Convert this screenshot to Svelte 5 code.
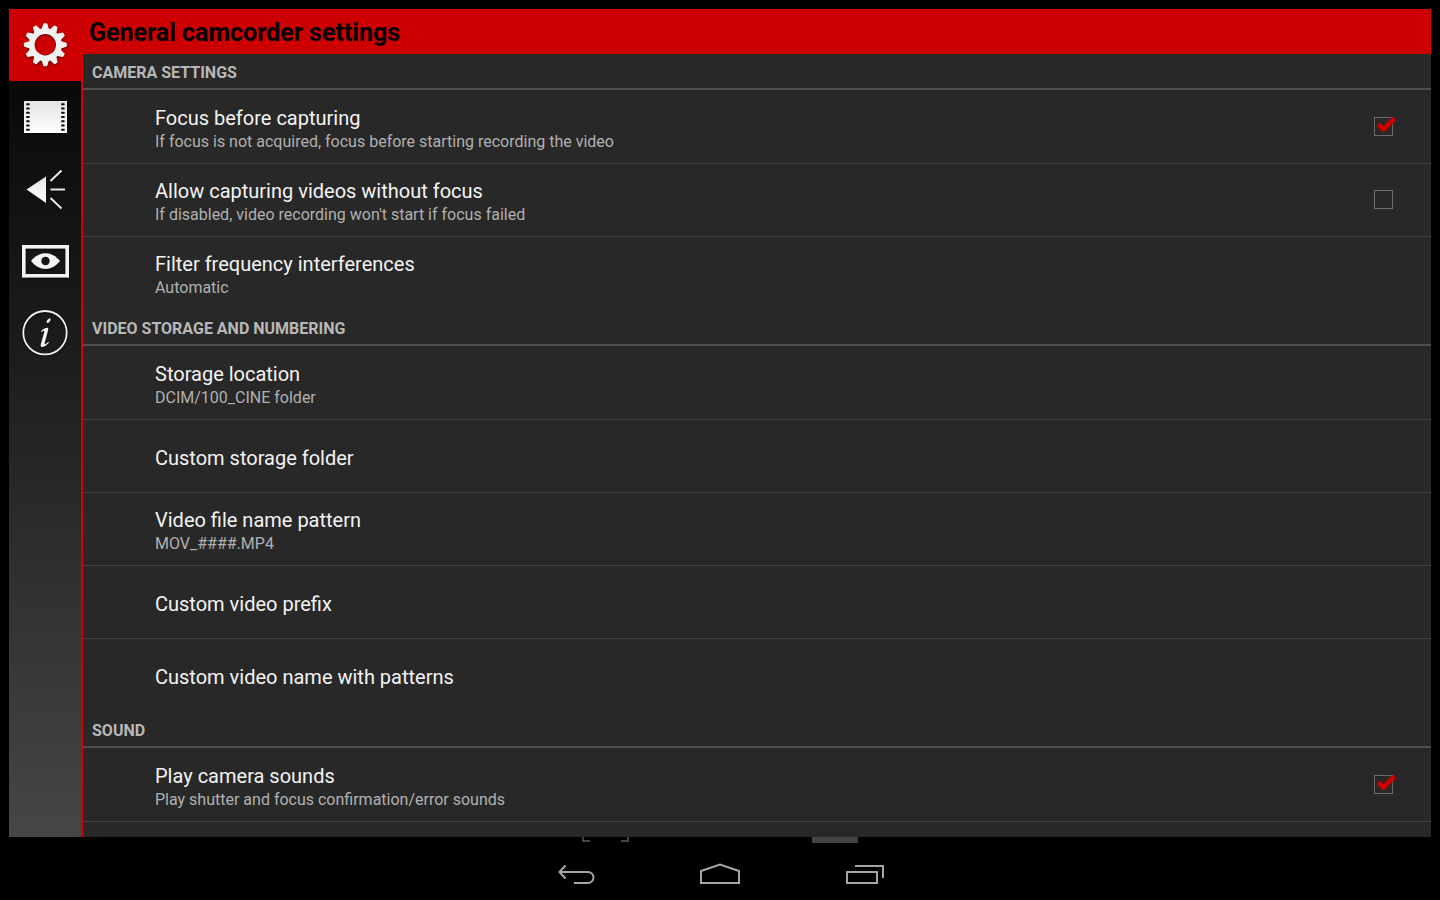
<script>
  const tabs = [
    { id: 'general', label: 'General camcorder settings' },
    { id: 'video', label: 'Video' },
    { id: 'audio', label: 'Audio' },
    { id: 'display', label: 'Display' },
    { id: 'about', label: 'About' }
  ];
  let active = $state('general');

  let sections = $state([
    {
      title: 'CAMERA SETTINGS',
      rows: [
        { id: 'focus', title: 'Focus before capturing', note: 'If focus is not acquired, focus before starting recording the video', checked: true },
        { id: 'nofocus', title: 'Allow capturing videos without focus', note: "If disabled, video recording won't start if focus failed", checked: false },
        { id: 'filter', title: 'Filter frequency interferences', note: 'Automatic' }
      ]
    },
    {
      title: 'VIDEO STORAGE AND NUMBERING',
      rows: [
        { id: 'location', title: 'Storage location', note: 'DCIM/100_CINE folder' },
        { id: 'folder', title: 'Custom storage folder' },
        { id: 'pattern', title: 'Video file name pattern', note: 'MOV_####.MP4' },
        { id: 'prefix', title: 'Custom video prefix' },
        { id: 'name', title: 'Custom video name with patterns' }
      ]
    },
    {
      title: 'SOUND',
      open: true,
      rows: [
        { id: 'sounds', title: 'Play camera sounds', note: 'Play shutter and focus confirmation/error sounds', checked: true }
      ]
    }
  ]);

  const teeth = Array.from({ length: 12 }, (_, i) => i * 30);
  const holes = [0, 1, 2, 3, 4, 5, 6];
</script>

{#snippet words(row)}
  <span class="words">
    <span class="name">{row.title}</span>
    {#if row.note}<span class="note">{row.note}</span>{/if}
  </span>
{/snippet}

<div class="screen">
  <div class="window">
    <nav class="tabs" aria-label="Categories">
      {#each tabs as tab}
        <button class="tab" class:active={active === tab.id} aria-label={tab.label} onclick={() => (active = tab.id)}>
          <svg viewBox="0 0 72 72" width="72" height="72" aria-hidden="true">
            <defs>
              <linearGradient id="shade-{tab.id}" x1="0" y1="0" x2="0" y2="1">
                <stop offset="0" stop-color="#e4e4e4" />
                <stop offset="1" stop-color="#ffffff" />
              </linearGradient>
            </defs>
            {#if tab.id === 'general'}
              <g fill="#f1f1f1">
                {#each teeth as angle}
                  <path d="M32.9 21 L34.8 14.8 H37.8 L39.7 21 Z" stroke="#f1f1f1" stroke-linejoin="round" transform="rotate({angle} 36.3 35.8)" />
                {/each}
                <circle cx="36.3" cy="35.8" r="13.6" fill="none" stroke="#f1f1f1" stroke-width="5.8" />
              </g>
            {:else if tab.id === 'video'}
              <rect x="15" y="20" width="43" height="32" fill="url(#shade-video)" />
              {#each holes as n}
                <rect x="17.2" y={22.3 + n * 4.25} width="3.4" height="2" rx="0.5" fill="#0c0c0c" />
                <rect x="52.2" y={22.3 + n * 4.25} width="3.4" height="2" rx="0.5" fill="#0c0c0c" />
              {/each}
            {:else if tab.id === 'audio'}
              <path d="M17.5 36.5 L37 23.5 V50 Z" fill="url(#shade-audio)" />
              <path d="M41.5 28 L52.5 17.5 M41.5 36.5 H56 M41.5 45 L52.5 55.5" fill="none" stroke="#e8e8e8" stroke-width="2" />
            {:else if tab.id === 'display'}
              <rect x="14.8" y="21.8" width="43.4" height="29" fill="none" stroke="#f3f3f3" stroke-width="3.6" />
              <path d="M22 36 C30 25.5 43 25.5 51 36 C43 46.5 30 46.5 22 36 Z" fill="#f3f3f3" />
              <circle cx="36.5" cy="36" r="4.2" fill="#151515" />
            {:else}
              <circle cx="36" cy="35.7" r="21.7" fill="none" stroke="#f1f1f1" stroke-width="1.8" />
              <path d="M37.6 24.8 C37.8 23 39 21.8 40.4 21.4 C41.4 21.2 41.8 22 41.4 23.2 C41 24.8 39.6 26 38.4 26 C37.8 26 37.5 25.5 37.6 24.8 Z" fill="#f4f4f4" />
              <path d="M32 34.2 C34 32.2 36.5 30.7 38.2 30.8 C39.4 31 39.5 32 39 33.8 L35.6 46.2 C35.4 47.2 35.8 47.5 36.5 47.1 L39.6 44.8 L40 45.4 C37.5 48.3 35 50 33 50 C31.6 50 31.4 48.8 31.8 47.2 L35.2 35.2 C35.5 33.9 35 33.6 34.2 34 L32.3 34.9 Z" fill="#f4f4f4" />
            {/if}
          </svg>
        </button>
      {/each}
    </nav>

    <main class="content">
      <h1>General camcorder settings</h1>
      <div class="list">
        {#each sections as section}
          <section>
            <h2>{section.title}</h2>
            <ul class:open={section.open}>
              {#each section.rows as row}
                <li>
                  {#if row.checked !== undefined}
                    <label class="row" for={row.id}>
                      {@render words(row)}
                      <span class="box">
                        <input id={row.id} type="checkbox" bind:checked={row.checked} />
                        <svg class="tick" viewBox="0 0 24 24" width="24" height="24" aria-hidden="true">
                          <path d="M4.5 10.5 L9.5 15.5 L20.5 4.5" fill="none" stroke="#d40000" stroke-width="4" />
                        </svg>
                      </span>
                    </label>
                  {:else}
                    <button class="row">{@render words(row)}</button>
                  {/if}
                </li>
              {/each}
            </ul>
          </section>
        {/each}
      </div>
    </main>
  </div>

  <footer class="system">
    <div class="keys">
      <div class="key">
        <svg class="peek" viewBox="0 0 48 6" width="48" height="6" aria-hidden="true">
          <path d="M1 0 V4 H8 M39 4 H46 V0" fill="none" stroke="#444" stroke-width="2" />
        </svg>
        <button aria-label="Back">
          <svg viewBox="0 0 48 28" width="48" height="28" aria-hidden="true">
            <path d="M13.5 5.5 L7.5 12 L13.5 18.5 M7.5 12 H36 A5.5 5.5 0 0 1 36 23 H22" fill="none" stroke="#a6a6a6" stroke-width="2" />
          </svg>
        </button>
      </div>
      <div class="key">
        <button aria-label="Home">
          <svg viewBox="0 0 48 28" width="48" height="28" aria-hidden="true">
            <path d="M5 23 V11 L24 4.5 L43 11 V23 Z" fill="none" stroke="#a6a6a6" stroke-width="2" />
          </svg>
        </button>
      </div>
      <div class="key">
        <svg class="peek right" viewBox="0 0 48 6" width="48" height="6" aria-hidden="true">
          <path d="M1 0 H47 V6 H1 Z" fill="#444" />
        </svg>
        <button aria-label="Recent apps">
          <svg viewBox="0 0 48 28" width="48" height="28" aria-hidden="true">
            <path d="M7 12 H37 V23 H7 Z M15 6 H43 V18" fill="none" stroke="#a6a6a6" stroke-width="2" />
          </svg>
        </button>
      </div>
    </div>
  </footer>
</div>

<style>
  :global(body) {
    margin: 0;
    background: #000;
  }
  .screen {
    box-sizing: border-box;
    height: 100vh;
    padding: 9px 9px 0;
    display: flex;
    flex-direction: column;
    background: #000;
    font-family: Roboto, "Noto Sans", sans-serif;
    color: #f3f3f3;
  }
  button {
    margin: 0;
    padding: 0;
    border: 0;
    background: none;
    color: inherit;
    font: inherit;
    text-align: left;
    cursor: pointer;
  }
  svg {
    display: block;
  }
  .window {
    flex: 1;
    min-height: 0;
    display: flex;
    overflow: hidden;
    background: #282828;
  }
  .tabs {
    flex: none;
    display: flex;
    flex-direction: column;
    background: linear-gradient(#000 0%, #0d0d0d 14%, #1a1a1a 38%, #464646 100%);
    border-right: 2px solid #d40000;
  }
  .tab {
    height: 72px;
  }
  .tab svg {
    filter: drop-shadow(0 1px 1px rgba(0, 0, 0, 0.6));
  }
  .tab.active {
    background: #cc0000;
  }
  .content {
    flex: 1;
    min-width: 0;
    display: flex;
    flex-direction: column;
  }
  h1 {
    flex: none;
    margin: 0 0 0 -2px;
    padding: 2px 8px 0;
    background: #cc0000;
    color: #000;
    font-size: 25px;
    line-height: 43px;
    font-weight: 700;
  }
  .list {
    flex: 1;
    min-height: 0;
    overflow: hidden;
  }
  h2 {
    margin: 0;
    padding: 4px 9px 0;
    border-bottom: 2px solid #505050;
    color: #b8b8b8;
    font-size: 16px;
    line-height: 30px;
    font-weight: 700;
  }
  ul {
    margin: 0;
    padding: 1px 0 0;
    list-style: none;
  }
  li {
    box-sizing: border-box;
    height: 73px;
    border-bottom: 1px solid #444;
  }
  ul:not(.open) li:last-child {
    border-bottom-color: transparent;
  }
  .row {
    box-sizing: border-box;
    width: 100%;
    height: 100%;
    padding: 0 38px 0 72px;
    display: flex;
    align-items: center;
    justify-content: space-between;
    cursor: pointer;
  }
  .words {
    padding-top: 3px;
    display: flex;
    flex-direction: column;
  }
  .name {
    font-size: 20px;
    line-height: 26px;
  }
  .note {
    color: #b0b0b0;
    font-size: 16px;
    line-height: 22px;
  }
  .box {
    position: relative;
    width: 19px;
    height: 19px;
    margin-bottom: 2px;
  }
  input {
    appearance: none;
    display: block;
    box-sizing: border-box;
    width: 19px;
    height: 19px;
    margin: 0;
    border: 1px solid #6c6c6c;
  }
  .tick {
    position: absolute;
    left: 0;
    top: -3px;
    display: none;
    pointer-events: none;
    filter: drop-shadow(0 0 2px rgba(160, 0, 0, 0.7));
  }
  input:checked + .tick {
    display: block;
  }
  .system {
    flex: none;
    height: 63px;
    display: flex;
    justify-content: center;
  }
  .keys {
    display: flex;
    gap: 96px;
  }
  .key {
    position: relative;
    padding-top: 23px;
  }
  .peek {
    position: absolute;
    left: 30px;
    top: 0;
  }
  .peek.right {
    left: -29px;
  }
</style>
